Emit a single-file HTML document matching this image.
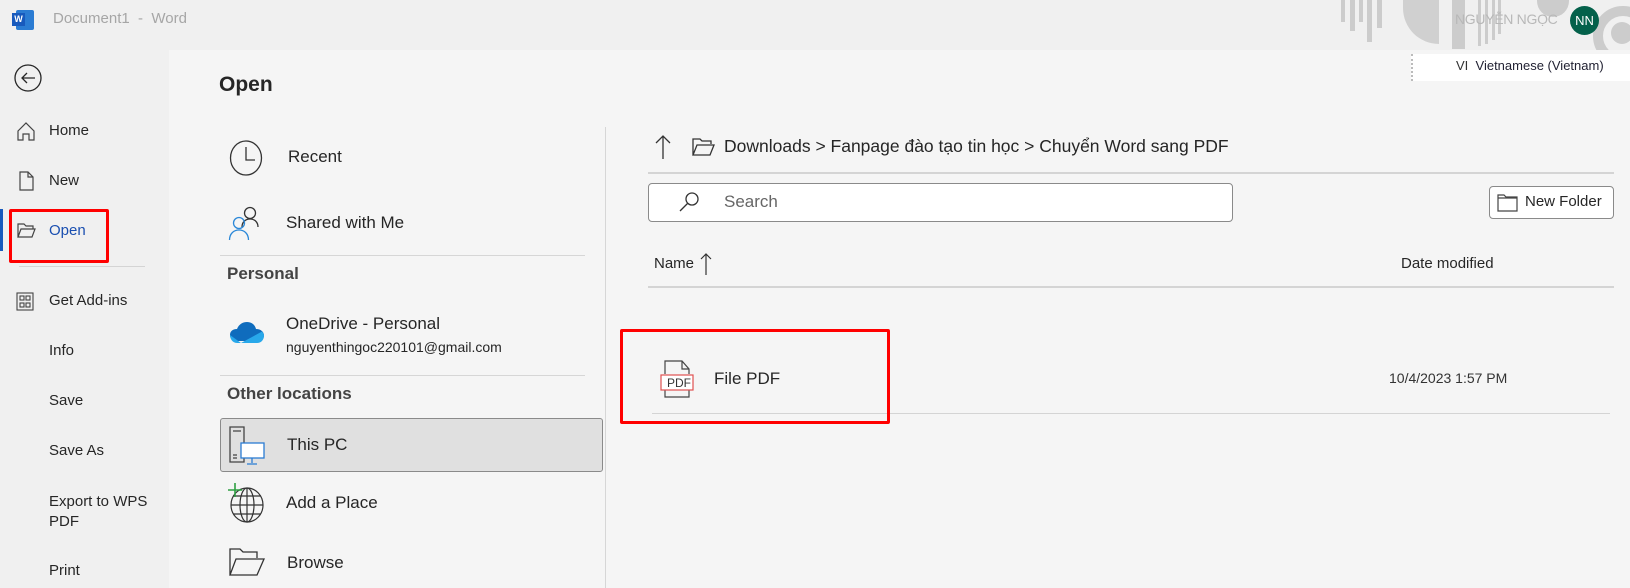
<!DOCTYPE html>
<html><head><meta charset="utf-8"><style>
*{margin:0;padding:0;box-sizing:border-box}
body{width:1630px;height:588px;overflow:hidden;background:#f0f0f0;font-family:"Segoe UI","Liberation Sans","Noto Sans CJK SC",sans-serif;color:#262626;position:relative}
.a{position:absolute;white-space:nowrap}
.side{font-size:15px;color:#262626}
.c{font-size:17px}
</style></head><body>
<!-- title bar decor -->
<div class="a" style="left:1341px;top:0;width:4px;height:22px;background:#ccc"></div>
<div class="a" style="left:1350px;top:0;width:5px;height:31px;background:#ccc"></div>
<div class="a" style="left:1359px;top:0;width:4px;height:22px;background:#ccc"></div>
<div class="a" style="left:1367px;top:0;width:5px;height:42px;background:#ccc"></div>
<div class="a" style="left:1377px;top:0;width:5px;height:28px;background:#ccc"></div>
<div class="a" style="left:1403px;top:0;width:36px;height:44px;border-radius:0 0 0 36px;background:#d0d0d0"></div>
<div class="a" style="left:1452px;top:0;width:13px;height:49px;background:#ccc"></div>
<div class="a" style="left:1478px;top:0;width:3px;height:46px;background:#ccc"></div>
<div class="a" style="left:1485px;top:0;width:3px;height:44px;background:#ccc"></div>
<div class="a" style="left:1492px;top:0;width:3px;height:40px;background:#ccc"></div>
<div class="a" style="left:1498px;top:0;width:3px;height:34px;background:#ccc"></div>
<div class="a" style="left:1537px;top:-15px;width:32px;height:32px;border-radius:50%;background:#ccc"></div>
<div class="a" style="left:1593px;top:6px;width:60px;height:60px;border-radius:50%;border:10px solid #ccc"></div>
<div class="a" style="left:1611px;top:22px;width:22px;height:22px;border-radius:50%;background:#ccc"></div>
<!-- word icon -->
<div class="a" style="left:16px;top:10px;width:18px;height:20px;background:#2b7cd3;border-radius:2px"></div>
<div class="a" style="left:12px;top:13px;width:13px;height:13px;background:#185abd;color:#fff;font-size:9px;font-weight:bold;text-align:center;line-height:13px">W</div>
<div class="a" style="left:53px;top:10px;font-size:15px;color:#a6a6a6">Document1 &nbsp;- &nbsp;Word</div>
<div class="a" style="left:1455px;top:11px;font-size:14px;color:#b8b8b8;letter-spacing:-0.3px">NGUYỄN NGỌC</div>
<div class="a" style="left:1570px;top:6px;width:29px;height:29px;border-radius:50%;background:#04614b;color:#fff;font-size:13px;text-align:center;line-height:29px">NN</div>
<!-- content panel -->
<div class="a" style="left:169px;top:50px;width:1461px;height:538px;background:#f5f5f5"></div>
<!-- lang bar -->
<div class="a" style="left:1411px;top:54px;width:219px;height:27px;background:#fff;border-left:2px dotted #bbb"></div>
<div class="a" style="left:1456px;top:58px;font-size:13px;color:#333">VI&nbsp; <span style="color:#223">Vietnamese (Vietnam)</span></div>
<!-- sidebar -->
<svg class="a" style="left:13px;top:63px" width="30" height="30" viewBox="0 0 30 30" fill="none" stroke="#262626" stroke-width="1.3"><circle cx="15" cy="15" r="13"/><path d="M22 15H9M14 10l-5 5 5 5"/></svg>
<svg class="a" style="left:17px;top:122px" width="18" height="19" viewBox="0 0 18 19" fill="none" stroke="#444" stroke-width="1.2"><path d="M1 9L9 1l8 8v9h-5v-6H6v6H1z"/></svg>
<div class="a side" style="left:49px;top:122px">Home</div>
<svg class="a" style="left:19px;top:171px" width="15" height="20" viewBox="0 0 15 20" fill="none" stroke="#444" stroke-width="1.2"><path d="M1 1h8l5 5v13H1z M9 1v5h5"/></svg>
<div class="a side" style="left:49px;top:172px">New</div>
<div class="a" style="left:0;top:209px;width:3px;height:42px;background:#185abd"></div>
<svg class="a" style="left:17px;top:223px" width="19" height="15" viewBox="0 0 19 15" fill="none" stroke="#444" stroke-width="1.2"><path d="M1 14V1h6l2 2h7v3 M1 14l3-8h14l-3 8z"/></svg>
<div class="a side" style="left:49px;top:222px;color:#1a4fb0">Open</div>
<div class="a" style="left:9px;top:209px;width:100px;height:54px;border:3px solid #f00;border-radius:2px"></div>
<div class="a" style="left:19px;top:266px;width:126px;height:1px;background:#d4d4d4"></div>
<svg class="a" style="left:16px;top:292px" width="18" height="19" viewBox="0 0 18 19" fill="none" stroke="#444" stroke-width="1.1"><rect x="1" y="1" width="16" height="17"/><rect x="4" y="4" width="4" height="4"/><rect x="10" y="4" width="4" height="4"/><rect x="4" y="11" width="4" height="4"/><rect x="10" y="11" width="4" height="4"/></svg>
<div class="a side" style="left:49px;top:292px">Get Add-ins</div>
<div class="a side" style="left:49px;top:342px">Info</div>
<div class="a side" style="left:49px;top:392px">Save</div>
<div class="a side" style="left:49px;top:442px">Save As</div>
<div class="a side" style="left:49px;top:492px;line-height:20px">Export to WPS<br>PDF</div>
<div class="a side" style="left:49px;top:562px">Print</div>
<!-- Open heading -->
<div class="a" style="left:219px;top:73px;font-size:21px;font-weight:600;color:#262626">Open</div>
<!-- locations -->
<svg class="a" style="left:229px;top:140px" width="34" height="36" viewBox="0 0 34 36" fill="none" stroke="#333" stroke-width="1.3"><ellipse cx="17" cy="18" rx="15.5" ry="17"/><path d="M17 7v13h9"/></svg>
<div class="a c" style="left:288px;top:147px">Recent</div>
<svg class="a" style="left:228px;top:205px" width="34" height="36" viewBox="0 0 34 36" fill="none" stroke-width="1.3"><circle cx="22" cy="8" r="5.5" stroke="#333"/><path d="M14 22c0-5 3.5-8 8-8s8 3 8 8" stroke="#333"/><circle cx="11" cy="18" r="5.5" stroke="#2b88d8"/><path d="M1.5 35c0-6 4-10 9.5-10s9.5 4 9.5 10" stroke="#2b88d8"/></svg>
<div class="a c" style="left:286px;top:213px">Shared with Me</div>
<div class="a" style="left:220px;top:255px;width:365px;height:1px;background:#d6d6d6"></div>
<div class="a" style="left:227px;top:264px;font-size:17px;font-weight:600;color:#444">Personal</div>
<svg class="a" style="left:229px;top:321px" width="36" height="26" viewBox="0 0 36 26"><path d="M8 20C3 20 1 17 1 14s2-6 7-6c2-5 6-7 10-7 5 0 8 3 9 7 5 0 8 3 8 6.5S32 20 28 20z" fill="#0f6cbd"/><path d="M1 14c0 3 2 8 7 8h20c4 0 7-3 7-7.5 0-1-1-3-2-4L12 22 1 14z" fill="#28a8ea"/></svg>
<div class="a c" style="left:286px;top:314px">OneDrive - Personal</div>
<div class="a" style="left:286px;top:339px;font-size:14px">nguyenthingoc220101@gmail.com</div>
<div class="a" style="left:220px;top:375px;width:365px;height:1px;background:#d6d6d6"></div>
<div class="a" style="left:227px;top:384px;font-size:17px;font-weight:600;color:#444">Other locations</div>
<div class="a" style="left:220px;top:418px;width:383px;height:54px;background:#e0e0e0;border:1px solid #8a8a8a;border-radius:3px"></div>
<svg class="a" style="left:228px;top:426px" width="38" height="40" viewBox="0 0 38 40" fill="none" stroke-width="1.3"><path d="M2 1h14v35H2z" stroke="#444"/><path d="M5 5h8M5 29h4M5 32h4" stroke="#444"/><rect x="13" y="17" width="23" height="15" fill="#fff" stroke="#2b7cd3"/><path d="M24 32v5M19 38h10" stroke="#2b7cd3"/></svg>
<div class="a c" style="left:287px;top:435px">This PC</div>
<svg class="a" style="left:227px;top:483px" width="38" height="40" viewBox="0 0 38 40" fill="none" stroke="#333" stroke-width="1.2"><ellipse cx="20" cy="22" rx="16" ry="17"/><ellipse cx="20" cy="22" rx="7" ry="17"/><path d="M4 22h32M6 13h28M6 31h28M20 5v34"/><path d="M8 0v14M1 7h14" stroke="#2ea043" stroke-width="1.6"/></svg>
<div class="a c" style="left:286px;top:493px">Add a Place</div>
<svg class="a" style="left:229px;top:548px" width="36" height="28" viewBox="0 0 36 28" fill="none" stroke="#333" stroke-width="1.3"><path d="M1 27V1h10l3 3h14v6 M1 27l6-16h28l-7 16z"/></svg>
<div class="a c" style="left:287px;top:553px">Browse</div>
<div class="a" style="left:605px;top:127px;width:1px;height:461px;background:#d6d6d6"></div>
<!-- right pane -->
<svg class="a" style="left:655px;top:134px" width="16" height="26" viewBox="0 0 16 26" fill="none" stroke="#333" stroke-width="1.3"><path d="M8 25V2M1 9l7-7 7 7"/></svg>
<svg class="a" style="left:692px;top:138px" width="23" height="18" viewBox="0 0 23 18" fill="none" stroke="#333" stroke-width="1.3"><path d="M1 17V1h7l2 2h9v3 M1 17l4-10h17l-4 10z"/></svg>
<div class="a" style="left:724px;top:136px;font-size:17.5px">Downloads &gt; Fanpage đào tạo tin học &gt; Chuyển Word sang PDF</div>
<div class="a" style="left:648px;top:172px;width:966px;height:2px;background:#d4d4d4"></div>
<div class="a" style="left:648px;top:183px;width:585px;height:39px;background:#fff;border:1px solid #8a8a8a;border-radius:4px"></div>
<svg class="a" style="left:679px;top:191px" width="22" height="22" viewBox="0 0 22 22" fill="none" stroke="#333" stroke-width="1.3"><circle cx="13" cy="8" r="6"/><path d="M9 12l-8 8"/></svg>
<div class="a" style="left:724px;top:192px;font-size:17px;color:#666">Search</div>
<div class="a" style="left:1489px;top:186px;width:125px;height:33px;background:#fff;border:1px solid #8a8a8a;border-radius:4px"></div>
<svg class="a" style="left:1497px;top:193px" width="21" height="19" viewBox="0 0 21 19" fill="none" stroke="#444" stroke-width="1.2"><path d="M1 2h6l2 2h11v14H1z M1 5h19"/></svg>
<div class="a" style="left:1525px;top:193px;font-size:15px">New Folder</div>
<div class="a" style="left:654px;top:255px;font-size:15px">Name</div>
<svg class="a" style="left:700px;top:252px" width="12" height="24" viewBox="0 0 12 24" fill="none" stroke="#333" stroke-width="1.2"><path d="M6 23V2M1 7l5-5 5 5"/></svg>
<div class="a" style="left:1401px;top:255px;font-size:15px">Date modified</div>
<div class="a" style="left:648px;top:286px;width:966px;height:2px;background:#d4d4d4"></div>
<svg class="a" style="left:660px;top:360px" width="36" height="38" viewBox="0 0 36 38" fill="none" stroke-width="1.2"><path d="M5 14V1h17l7 8v5 M5 30v7h24v-7 M22 1v8h7" stroke="#444"/><rect x="1" y="15" width="32" height="15" fill="#fff" stroke="#e05050"/></svg>
<div class="a" style="left:663px;top:376px;width:32px;text-align:center;font-size:12px;line-height:14px;color:#333">PDF</div>
<div class="a" style="left:714px;top:369px;font-size:17px">File PDF</div>
<div class="a" style="left:1389px;top:370px;font-size:14px;color:#333">10/4/2023 1:57 PM</div>
<div class="a" style="left:652px;top:413px;width:958px;height:1px;background:#d4d4d4"></div>
<div class="a" style="left:620px;top:329px;width:270px;height:95px;border:3px solid #f00;border-radius:2px"></div>
</body></html>
